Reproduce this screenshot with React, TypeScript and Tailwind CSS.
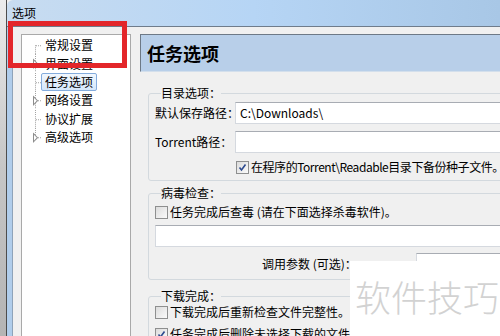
import React from 'react';

type TreeItem = {
  label: string;
  expander?: boolean;
  selected?: boolean;
};

const treeItems: TreeItem[] = [
  { label: '常规设置' },
  { label: '界面设置', expander: true },
  { label: '任务选项', selected: true },
  { label: '网络设置', expander: true },
  { label: '协议扩展' },
  { label: '高级选项', expander: true },
];

const TreeGlyph: React.FC<{ index: number; total: number; expander?: boolean }> = ({ index, total, expander }) => {
  const first = index === 0;
  const last = index === total - 1;
  return (
    <svg className="w-[19px] h-full shrink-0" viewBox="0 0 19 18" preserveAspectRatio="none">
      <line
        x1="13.5"
        x2="13.5"
        y1={first ? 9 : 0}
        y2={last ? 9 : 18}
        stroke="#a3a3a3"
        strokeWidth="1"
        strokeDasharray="1 1"
      />
      <line x1="14" x2="19" y1="9.5" y2="9.5" stroke="#a3a3a3" strokeWidth="1" strokeDasharray="1 1" />
      {expander && <path d="M11.5 5.5 L15.5 9.5 L11.5 13.5 Z" fill="#ffffff" stroke="#8e8e8e" strokeWidth="1" />}
    </svg>
  );
};

const Checkbox: React.FC<{ checked?: boolean }> = ({ checked }) => (
  <span className="w-[13px] h-[13px] shrink-0 border border-[#8e8f8f] bg-linear-to-br from-[#dcdcdc] to-[#fafafa] flex items-center justify-center">
    {checked && (
      <svg className="w-[9px] h-[9px]" viewBox="0 0 9 9">
        <path d="M1.5 4.5 L3.5 7 L7.5 1.5" fill="none" stroke="#2c4a8f" strokeWidth="1.6" />
      </svg>
    )}
  </span>
);

const TextBox: React.FC<{ value?: string; className?: string }> = ({ value, className }) => (
  <div
    className={`h-[22px] bg-white border border-[#d5d9df] border-t-[#a8acb3] flex items-center pl-[4px] text-[12px] text-black whitespace-nowrap ${className ?? ''}`}
  >
    {value}
  </div>
);

const App: React.FC = () => {
  return (
    <div
      className="relative w-[500px] h-[336px] overflow-hidden flex bg-[#f0f0f0] text-black"
      style={{ fontFamily: '"Noto Sans CJK SC", "Noto Sans", sans-serif' }}
    >
      {/* window behind */}
      <div className="w-[7px] h-full shrink-0 bg-linear-to-b from-[#ececec] via-[#c6c6c6] to-[#b4b4b4] border-r border-[#4d4d4d]" />

      {/* dialog window */}
      <div className="flex-1 min-w-0 flex flex-col">
        <div className="h-[27px] shrink-0 rounded-tl-[6px] border-b border-[#6f7c8b] bg-linear-to-r from-[#c8dcf0] via-[#b6d5f5] to-[#a8c7e6] flex items-center pl-[5px] text-[12px] text-black">
          选项
        </div>

        <div className="flex flex-1 min-h-0">
          <div className="w-[6px] shrink-0 bg-[#b0cdeb] border-r border-[#8ea3b9]" />

          <div className="flex-1 min-w-0 flex pt-[7px] pl-[8px] gap-[9px] overflow-hidden">
            {/* tree */}
            <div className="w-[110px] shrink-0 bg-white border border-[#a9a9a9] border-b-0 pt-[1px]">
              {treeItems.map((item, i) => (
                <div key={item.label} className="h-[18.4px] flex items-stretch">
                  <TreeGlyph index={i} total={treeItems.length} expander={item.expander} />
                  <div className="flex items-center">
                    <span
                      className={`text-[12px] leading-[16px] px-[3px] border rounded-[2px] ${
                        item.selected
                          ? 'border-[#84acdd] bg-linear-to-b from-[#f1f7fe] to-[#d5e7fb]'
                          : 'border-transparent'
                      }`}
                    >
                      {item.label}
                    </span>
                  </div>
                </div>
              ))}
            </div>

            {/* right panel */}
            <div className="w-[380px] shrink-0 flex flex-col">
              <div className="h-[38px] shrink-0 border-t border-l border-[#6d7986] border-b-[#d3dfec] border-b bg-[#b8cfe9] flex items-center pl-[6px]">
                <span className="text-[18px] font-bold leading-none">任务选项</span>
              </div>

              <div className="pl-[8px] pt-[13px] flex flex-col">
                <fieldset className="border border-[#d3d9de] rounded-[3px] px-[6px] pb-[5px]">
                  <legend className="ml-[6px] text-[12px] leading-[16px]">目录选项：</legend>
                  <div className="flex items-center mt-[1px]">
                    <span className="w-[80px] shrink-0 text-[12px] whitespace-nowrap">默认保存路径：</span>
                    <TextBox value="C:\Downloads\" className="flex-1" />
                  </div>
                  <div className="flex items-center mt-[7px]">
                    <span className="w-[80px] shrink-0 text-[12px] whitespace-nowrap">Torrent路径：</span>
                    <TextBox className="flex-1" />
                  </div>
                  <div className="flex items-center h-[16px] mt-[6px] pl-[81px] gap-[2px]">
                    <Checkbox checked />
                    <span className="text-[12px] tracking-[-0.45px] whitespace-nowrap">
                      在程序的Torrent\Readable目录下备份种子文件。
                    </span>
                  </div>
                </fieldset>

                <fieldset className="mt-[4px] border border-[#d3d9de] rounded-[3px] px-[6px] pb-[4px]">
                  <legend className="ml-[6px] text-[12px] leading-[16px]">病毒检查：</legend>
                  <div className="flex items-center h-[16px] mt-[3px] gap-[2px]">
                    <Checkbox />
                    <span className="text-[12px] whitespace-nowrap">任务完成后查毒 (请在下面选择杀毒软件)。</span>
                  </div>
                  <TextBox className="mt-[5px]" />
                  <div className="flex items-center mt-[6px]">
                    <span className="ml-[107px] text-[12px] whitespace-nowrap">调用参数 (可选)：</span>
                    <TextBox className="ml-[59px] flex-1" />
                  </div>
                </fieldset>

                <fieldset className="mt-[8px] border border-[#d3d9de] rounded-[3px] px-[6px] pb-[4px]">
                  <legend className="ml-[6px] text-[12px] leading-[16px]">下载完成：</legend>
                  <div className="flex items-center h-[16px] gap-[2px]">
                    <Checkbox />
                    <span className="text-[12px] whitespace-nowrap">下载完成后重新检查文件完整性。</span>
                  </div>
                  <div className="flex items-center h-[16px] mt-[6px] gap-[2px]">
                    <Checkbox checked />
                    <span className="text-[12px] whitespace-nowrap">任务完成后删除未选择下载的文件。</span>
                  </div>
                </fieldset>
              </div>
            </div>
          </div>
        </div>
      </div>

      {/* red highlight */}
      <div className="absolute left-[8px] top-[21px] w-[119px] h-[47px] border-[5px] border-[#e3262a]" />

      {/* watermark */}
      <div className="absolute left-[350px] top-[261px] w-[150px] h-[75px] bg-white pl-[5px] pt-[17px]">
        <span className="text-[36px] leading-none font-light text-[#d2d2d2] whitespace-nowrap">软件技巧</span>
      </div>
    </div>
  );
};

export default App;
